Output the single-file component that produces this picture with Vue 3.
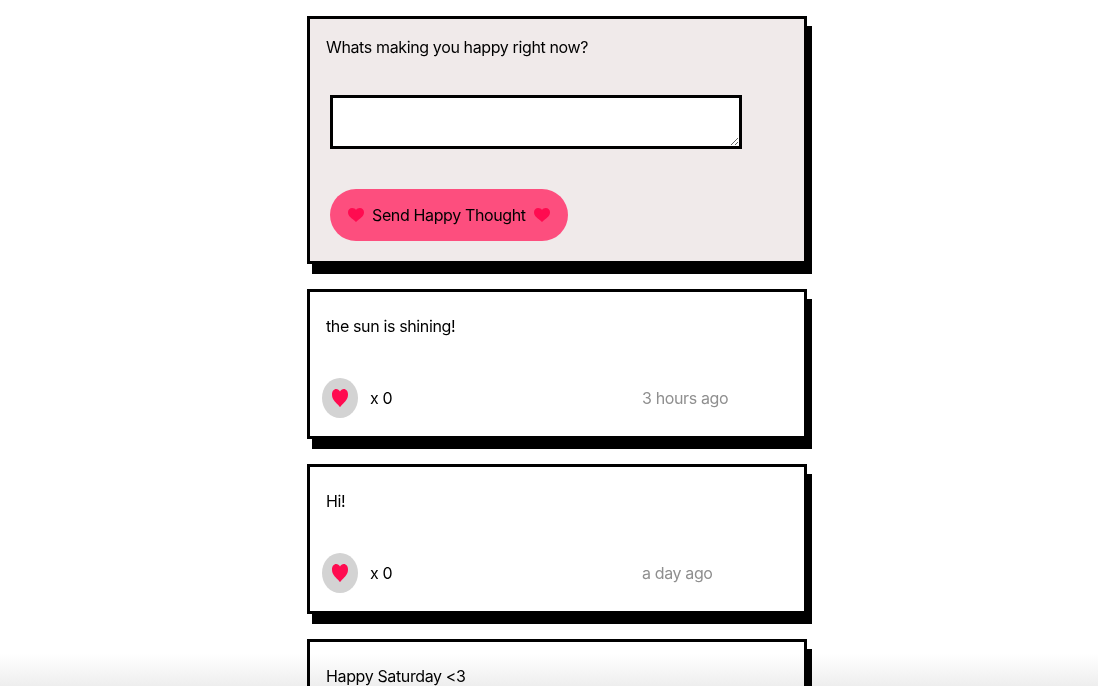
<script setup>
const thoughts = [
  { id: 1, text: 'the sun is shining!', likes: 0, time: '3 hours ago' },
  { id: 2, text: 'Hi!', likes: 0, time: 'a day ago' },
  { id: 3, text: 'Happy Saturday <3' },
]
const heartPath = 'M8 14C7.6 13.6 7 13.1 6 12.2 3 9.8 0 7.8 0 4.2 0 1.8 1.8 0 4.2 0 5.8 0 7.2.7 8 1.9 8.8.7 10.2 0 11.8 0 14.2 0 16 1.8 16 4.2 16 7.8 13 9.8 10 12.2 9 13.1 8.4 13.6 8 14Z'
</script>

<template>
  <div class="page">
    <main class="feed">
      <form class="card composer" @submit.prevent>
        <p class="prompt">Whats making you happy right now?</p>
        <textarea class="input" aria-label="Happy thought"></textarea>
        <button class="send" type="submit">
          <svg class="heart" viewBox="0 0 16 14" aria-hidden="true"><path :d="heartPath" /></svg>
          <span>Send Happy Thought</span>
          <svg class="heart" viewBox="0 0 16 14" aria-hidden="true"><path :d="heartPath" /></svg>
        </button>
      </form>

      <article v-for="t in thoughts" :key="t.id" class="card thought">
        <p class="message">{{ t.text }}</p>
        <div v-if="t.time" class="meta">
          <div class="likes">
            <button class="like" type="button" aria-label="Like">
              <svg class="heart tall" viewBox="0 0 16 14" preserveAspectRatio="none" aria-hidden="true"><path :d="heartPath" /></svg>
            </button>
            <span>x {{ t.likes }}</span>
          </div>
          <span class="time">{{ t.time }}</span>
        </div>
      </article>
    </main>
    <div class="fade"></div>
  </div>
</template>

<style>
html, body { margin: 0; background: #fff; }
</style>

<style scoped>
.page {
  position: relative;
  box-sizing: border-box;
  height: 100vh;
  overflow: hidden;
  padding-left: 16px;
  background: #fff;
  font-family: Inter, "Liberation Sans", sans-serif;
  font-size: 16px;
  letter-spacing: -0.37px;
  color: #000;
}
.feed {
  width: 500px;
  margin: 0 auto;
  padding-top: 16px;
  display: flex;
  flex-direction: column;
  gap: 25px;
}
.card {
  box-sizing: border-box;
  flex: none;
  width: 500px;
  border: 3px solid #000;
  box-shadow: 5px 10px 0 #000;
  background: #fff;
  padding: 0 16px;
}
.composer {
  height: 248px;
  background: #f0eaea;
  padding-top: 18px;
}
.prompt, .message { margin: 0; line-height: 20px; }
.input {
  display: block;
  box-sizing: border-box;
  width: 412px;
  height: 54px;
  margin: 38px 0 40px 4px;
  border: 3px solid #000;
  border-radius: 0;
  background: #fff;
  outline: none;
}
.send {
  display: flex;
  align-items: center;
  gap: 8px;
  box-sizing: border-box;
  width: 238px;
  height: 52px;
  margin-left: 4px;
  padding: 0 18px;
  border: 0;
  border-radius: 26px;
  background: #fd4e7e;
  color: #000;
  font: inherit;
  letter-spacing: inherit;
  white-space: nowrap;
}
.heart { display: block; flex: none; width: 16px; height: 14px; fill: #ff0b50; }
.tall { height: 18px; }
.thought {
  height: 150px;
  padding-top: 24px;
}
.meta {
  display: flex;
  align-items: center;
  margin: 42px 0 0 -4px;
}
.likes {
  display: flex;
  align-items: center;
  gap: 12px;
  width: 320px;
}
.like {
  display: flex;
  align-items: center;
  justify-content: center;
  width: 36px;
  height: 40px;
  padding: 0;
  border: 0;
  border-radius: 50%;
  background: #d3d3d3;
}
.time { color: #8f8f8f; }
.fade {
  position: absolute;
  left: 0;
  right: 0;
  bottom: 0;
  height: 32px;
  background: linear-gradient(to bottom, #fff, #eeeeee);
  mix-blend-mode: multiply;
  pointer-events: none;
}
</style>
